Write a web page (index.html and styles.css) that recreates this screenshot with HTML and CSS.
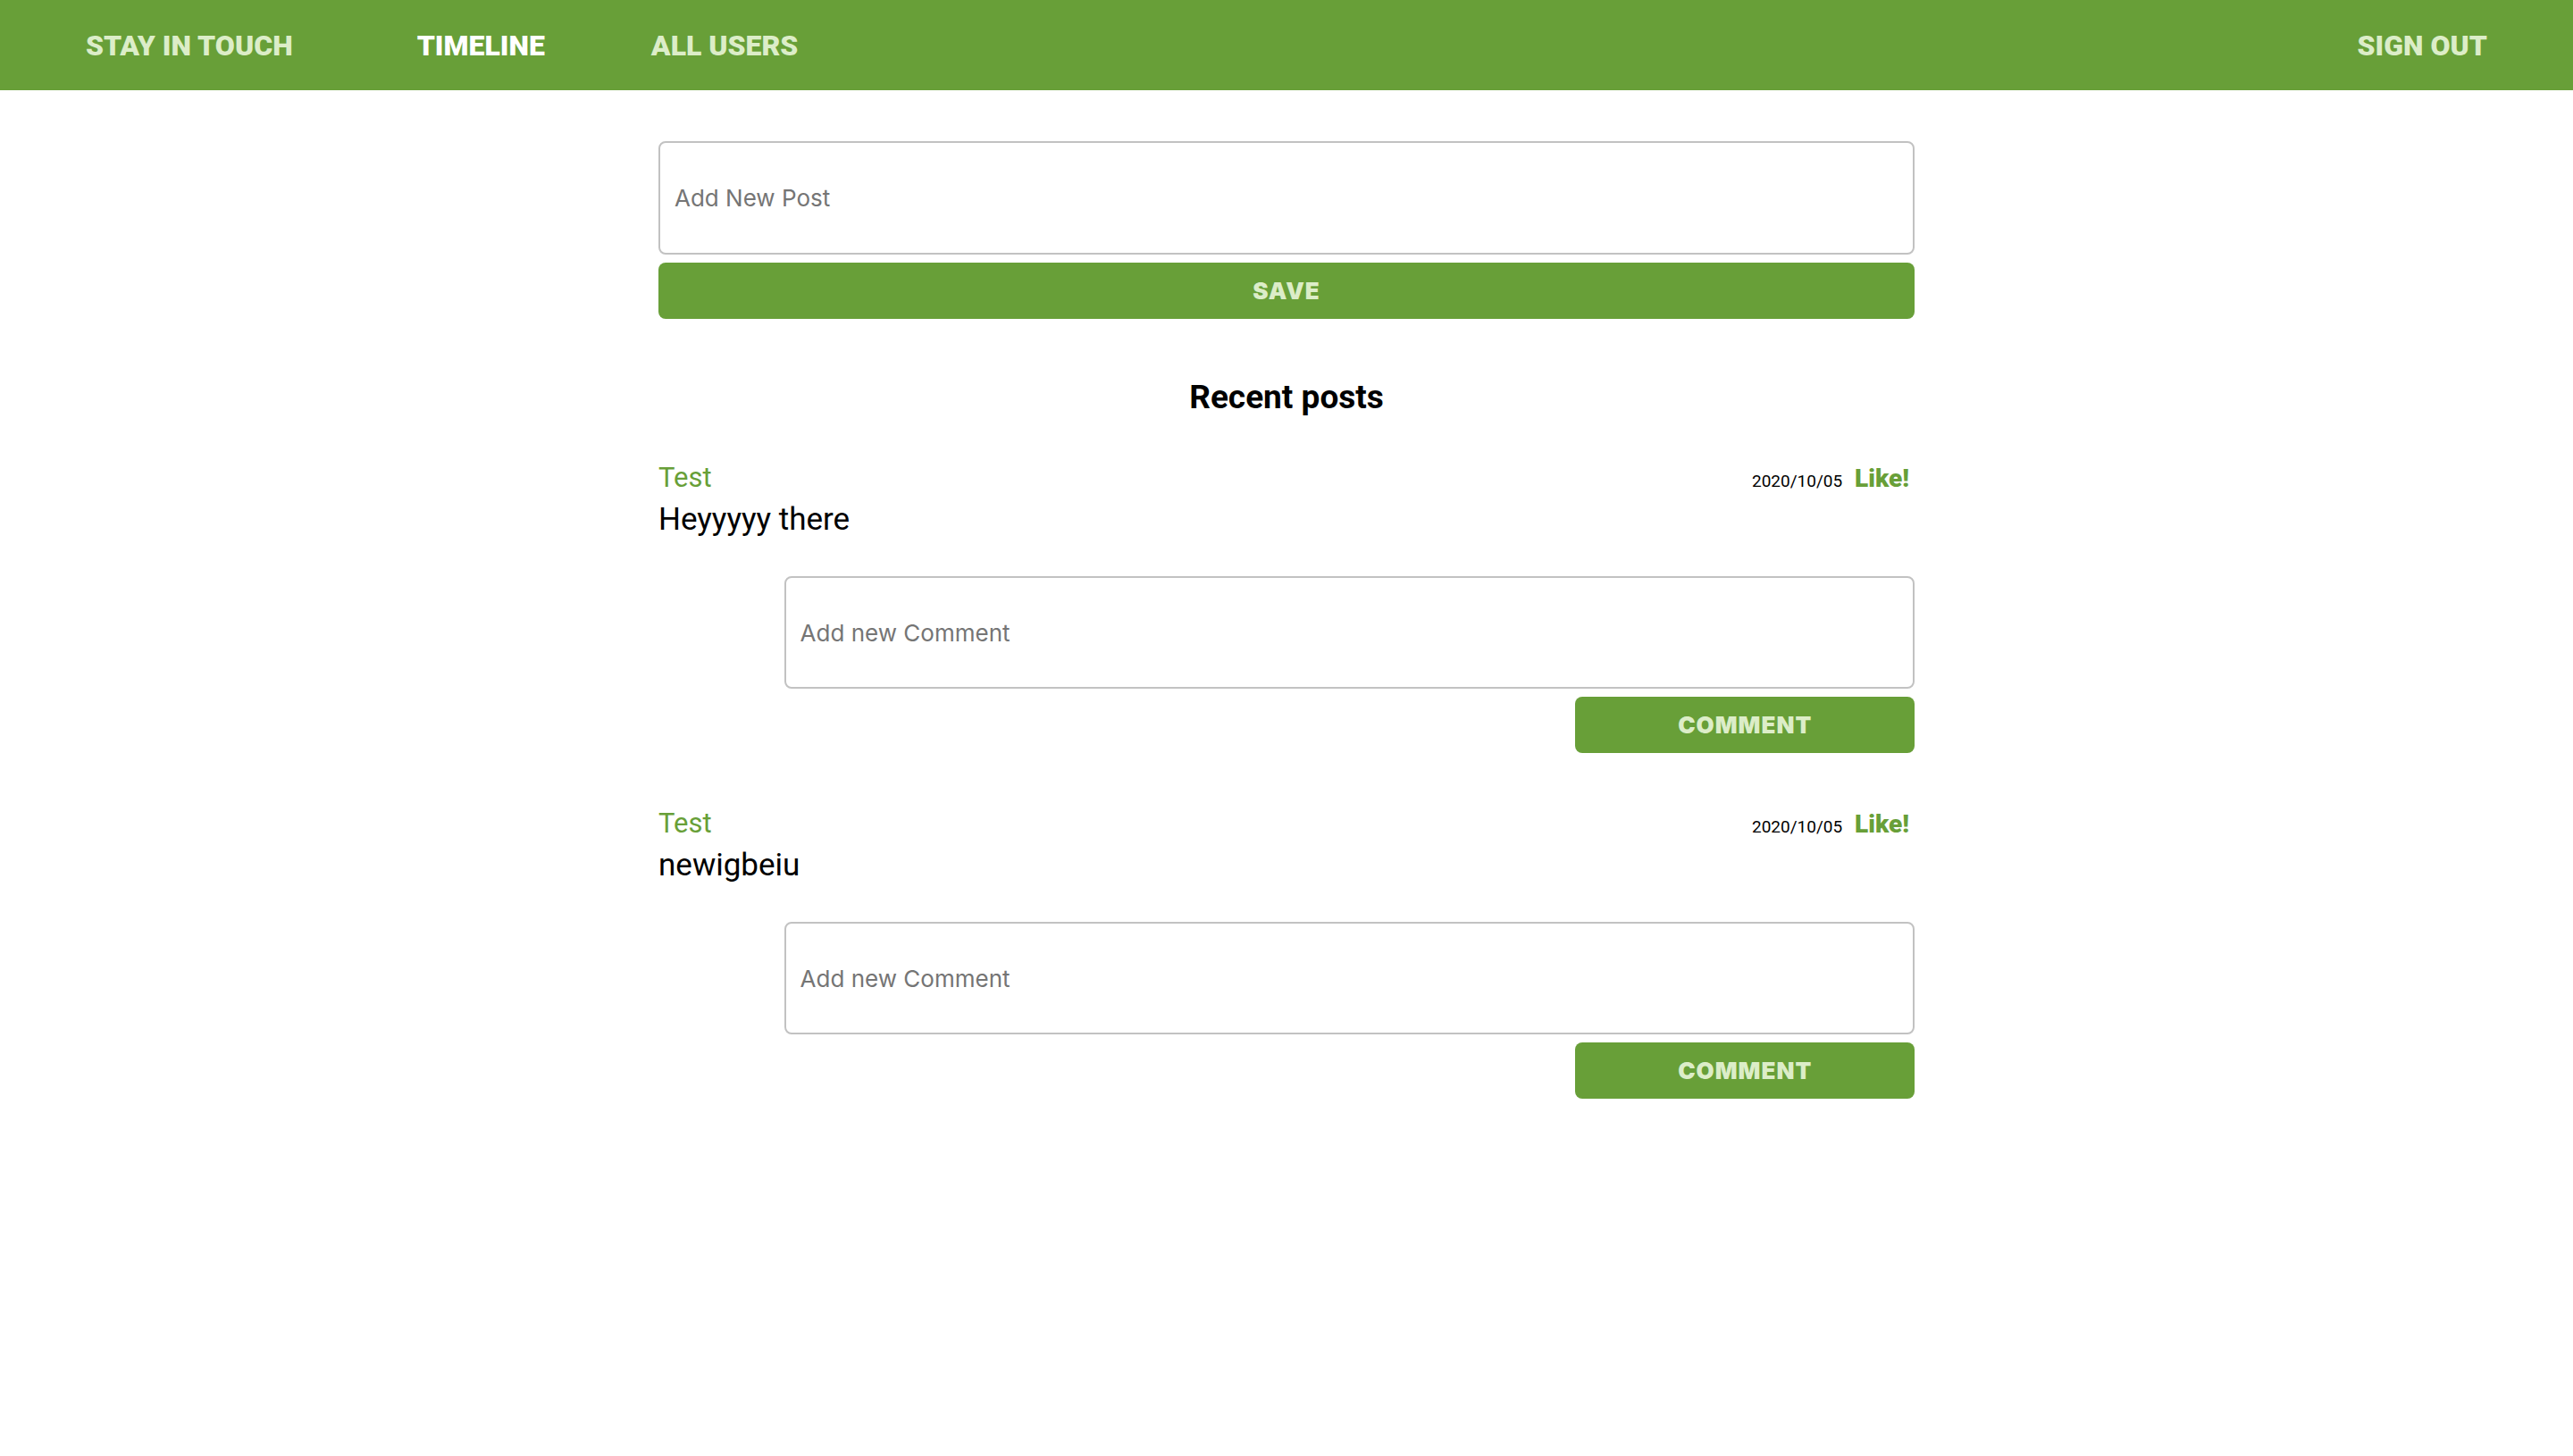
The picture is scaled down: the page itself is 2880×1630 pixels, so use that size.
FILE: index.html
```html
<!DOCTYPE html>
<html lang="en">
<head>
<meta charset="utf-8">
<title>Stay in Touch</title>
<link rel="stylesheet" href="styles.css">
</head>
<body>
<nav class="nav">
  <a class="nav-brand" href="#">STAY IN TOUCH</a>
  <a class="nav-link active" href="#">TIMELINE</a>
  <a class="nav-link" href="#">ALL USERS</a>
  <a class="nav-link signout" href="#">SIGN OUT</a>
</nav>
<main class="main">
  <form class="post-form">
    <input class="field post-field" type="text" placeholder="Add New Post">
    <button class="btn btn-save" type="button">SAVE</button>
  </form>
  <h2 class="section-title">Recent posts</h2>
  <article class="post">
    <div class="post-head">
      <span class="post-author">Test</span>
      <div class="post-meta">
        <span class="post-date">2020/10/05</span>
        <a class="post-like" href="#">Like!</a>
      </div>
    </div>
    <p class="post-body">Heyyyyy there</p>
    <form class="comment-form">
      <input class="field comment-field" type="text" placeholder="Add new Comment">
      <button class="btn btn-comment" type="button">COMMENT</button>
    </form>
  </article>
  <article class="post">
    <div class="post-head">
      <span class="post-author">Test</span>
      <div class="post-meta">
        <span class="post-date">2020/10/05</span>
        <a class="post-like" href="#">Like!</a>
      </div>
    </div>
    <p class="post-body">newigbeiu</p>
    <form class="comment-form">
      <input class="field comment-field" type="text" placeholder="Add new Comment">
      <button class="btn btn-comment" type="button">COMMENT</button>
    </form>
  </article>
</main>
</body>
</html>
```
FILE: styles.css
```css
* { box-sizing: border-box; }
body {
  margin: 0;
  background: #fff;
  font-family: Roboto, "Noto Sans", sans-serif;
  color: #000;
}
.nav {
  height: 101px;
  background: #689f38;
  display: flex;
  align-items: center;
  padding: 0 96px;
}
.nav a {
  font-family: Roboto, sans-serif;
  font-weight: 900;
  font-size: 32px;
  text-decoration: none;
  color: #dcedc8;
}
.nav-brand { margin-right: 139px; }
.nav-link { margin-right: 119px; }
.nav-link.active { color: #fff; }
.nav-link.signout { margin-left: auto; margin-right: 0; }

.main {
  width: 1406px;
  margin: 57px auto 0;
}
.post-form {
  display: flex;
  flex-direction: column;
  gap: 9px;
}
.field {
  display: block;
  width: 100%;
  height: 127px;
  border: 2px solid #c2c2c2;
  border-radius: 8px;
  padding: 0 16px;
  font-family: Inter, "Liberation Sans", sans-serif;
  font-size: 26px;
  color: #222;
  outline: none;
  background: #fff;
}
.field::placeholder { color: #757575; }
.comment-field { height: 126px; }
.btn {
  display: block;
  height: 63px;
  border: 0;
  border-radius: 8px;
  background: #689f38;
  color: #dcedc8;
  font-family: Inter, "DejaVu Sans", sans-serif;
  font-weight: 900;
  font-size: 26px;
  letter-spacing: 1px;
  cursor: pointer;
}
.btn-save { width: 100%; }

.section-title {
  margin: 67px 0 0;
  text-align: center;
  font-family: Roboto, sans-serif;
  font-weight: 700;
  font-size: 37px;
  line-height: 42px;
}
.post { margin-top: 50px; }
.post + .post { margin-top: 60px; }
.post-head {
  display: flex;
  align-items: baseline;
  justify-content: space-between;
  padding-right: 6px;
}
.post-author {
  font-size: 31px;
  color: #689f38;
}
.post-meta {
  display: flex;
  align-items: baseline;
  gap: 14px;
}
.post-date {
  font-size: 19px;
  color: #000;
}
.post-like {
  font-size: 28px;
  font-weight: 900;
  color: #689f38;
  text-decoration: none;
}
.post-body {
  margin: 8px 0 0;
  font-size: 35px;
}
.comment-form {
  width: 90%;
  margin: 43px 0 0 auto;
  display: flex;
  flex-direction: column;
  align-items: flex-end;
  gap: 9px;
}
.btn-comment { width: 30%; }
```
